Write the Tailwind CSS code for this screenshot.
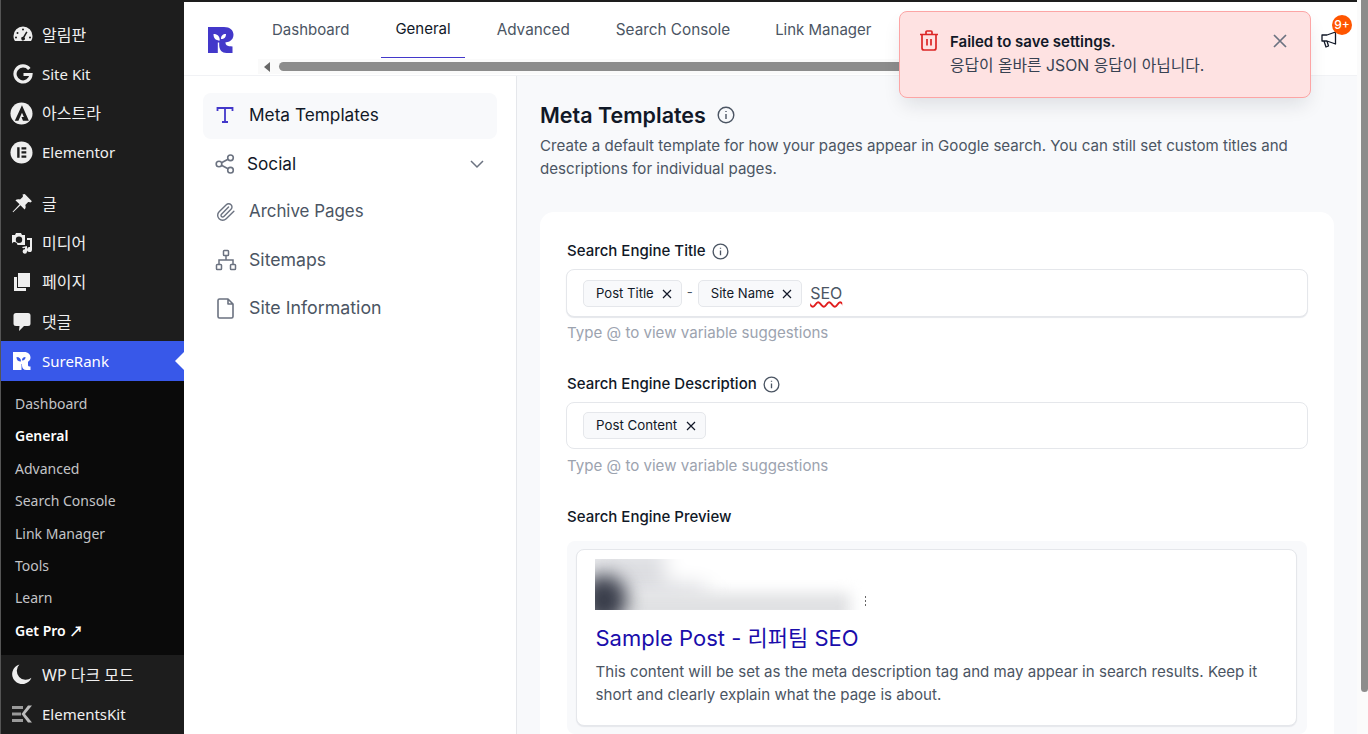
<!DOCTYPE html>
<html lang="ko">
<head>
<meta charset="utf-8">
<title>SureRank</title>
<script src="https://cdn.jsdelivr.net/npm/@tailwindcss/browser@4"></script>
</head>
<body class="h-[734px] w-[1368px] overflow-hidden bg-white font-['Inter','Noto_Sans_CJK_KR',sans-serif]">
<div class="relative flex h-[734px] w-[1368px] overflow-hidden">
  <!-- WP sidebar -->
  <aside class="flex h-full w-[184px] shrink-0 flex-col border-l border-[#555] bg-[#1d1d1d] pt-[15px] font-['Noto_Sans','Noto_Sans_CJK_KR',sans-serif] text-[15px] text-[#f0f0f0]">
    <a class="flex h-[39.3px] items-center"><span class="flex w-[41px] justify-center pl-[2px]"><svg class="h-[20px] w-[20px]" viewBox="0 0 20 20" fill="#eee"><path d="M10 1.5A9.5 9.5 0 0 0 .5 11c0 1.9.5 3.6 1.5 5h16c1-1.4 1.5-3.1 1.5-5A9.5 9.5 0 0 0 10 1.5zM10 3.5a1 1 0 1 1 0 2 1 1 0 0 1 0-2zM4.500 7a1 1 0 1 1 0 2 1 1 0 0 1 0-2zM3 11.500a1 1 0 1 1 0 2 1 1 0 0 1 0-2zM17 11.500a1 1 0 1 1 0 2 1 1 0 0 1 0-2zM13.200 6.500l1.300.7-3 5.300a1.800 1.800 0 1 1-1.400-.7z" fill-rule="evenodd"/></svg></span><span class="text-[16px]">알림판</span></a>
    <a class="flex h-[39.3px] items-center"><span class="flex w-[41px] justify-center pl-[2px]"><svg class="h-[20px] w-[20px]" viewBox="0 0 20 20" fill="none" stroke="#eee" stroke-width="3.200"><path d="M16.300 5A8 8 0 1 0 18 10.500H10.500"/></svg></span><span>Site Kit</span></a>
    <a class="flex h-[39.3px] items-center"><span class="flex w-[41px] justify-center"><svg class="h-[23px] w-[23px]" viewBox="0 0 24 24"><circle cx="12" cy="12" r="11.500" fill="#eee"/><path d="M12.500 3.500 5 19.500h3.800l3.700-8.300 2 4.500h-2.500l1.500 3.800h6.200z" fill="#1d1d1d"/></svg></span><span class="text-[16px]">아스트라</span></a>
    <a class="flex h-[39.3px] items-center"><span class="flex w-[41px] justify-center"><svg class="h-[23px] w-[23px]" viewBox="0 0 24 24"><circle cx="12" cy="12" r="11.500" fill="#eee"/><path d="M7.500 6.500h2.500v11H7.500zM12 6.500h5v2.300h-5zM12 10.800h5v2.300h-5zM12 15.200h5v2.300h-5z" fill="#1d1d1d"/></svg></span><span>Elementor</span></a>
    <div class="h-[12px]"></div>
    <a class="flex h-[39.3px] items-center"><span class="flex w-[41px] justify-center"><svg class="h-[22px] w-[22px]" viewBox="0 0 20 20" fill="#eee"><path d="M12.500 1 19 7.500l-1.300 1.100c-.8-.5-1.600-.6-2.300-.2L13 10.800c.6 1.500.4 3-.6 4.200L8.600 11.200 2 17.500l-.6-.5 6.400-6.700L4 6.600c1.200-1 2.800-1.200 4.200-.6l2.400-2.400c.4-.7.300-1.500-.2-2.300z"/></svg></span><span class="text-[16px]">글</span></a>
    <a class="flex h-[39.3px] items-center"><span class="flex w-[41px] justify-center"><svg class="h-[22px] w-[22px]" viewBox="0 0 22 22" fill="#eee"><path d="M1 3h3l1-2h5l1 2h3v10h-7.500A3 3 0 0 0 1 11.500zM8 4.500a3.200 3.200 0 1 0 0 6.400 3.200 3.200 0 0 0 0-6.400zM21 6v11.500a2.500 2.500 0 1 1-2-2.400V8h-3V6zM11 15l5-1v5.500a2.200 2.200 0 1 1-2-2.200v-1.500l-2 .5z"/></svg></span><span class="text-[16px]">미디어</span></a>
    <a class="flex h-[39.3px] items-center"><span class="flex w-[41px] justify-center"><svg class="h-[20px] w-[20px]" viewBox="0 0 20 20" fill="#eee"><path d="M6 1h12v14H6zM2 5h3v11h9v3H2z"/></svg></span><span class="text-[16px]">페이지</span></a>
    <a class="flex h-[39.3px] items-center"><span class="flex w-[41px] justify-center"><svg class="h-[20px] w-[20px]" viewBox="0 0 20 20" fill="#eee"><path d="M4 1h12a2.500 2.500 0 0 1 2.500 2.500v8A2.500 2.500 0 0 1 16 14h-4l-5 5 .5-5H4a2.500 2.500 0 0 1-2.500-2.500v-8A2.500 2.500 0 0 1 4 1z"/></svg></span><span class="text-[16px]">댓글</span></a>
    <a class="relative flex h-[40px] items-center bg-[#3858e9] text-white"><span class="flex w-[41px] justify-center"><svg class="h-[20px] w-[20px]" viewBox="0 0 20 20" fill="#fff"><path fill-rule="evenodd" d="M1 1h11c4.500 0 6.500 2.500 6.500 5.500 0 2-1 3.500-2.500 4.300V14c0 1 .7 1.600 2.500 1.600V19h-4c-3 0-4.500-1.800-4.500-4.500V13H9.500v6H1zM4.500 6c0 3 1.500 4.500 4.500 4.500 0-3-1.500-4.500-4.500-4.500zm9 0c-2.500 0-3.500 1.500-3.500 3.500 2.500 0 3.500-1.500 3.500-3.500z"/></svg></span><span>SureRank</span><span class="absolute right-0 top-[11px] h-0 w-0 border-y-[9px] border-r-[9px] border-y-transparent border-r-white"></span></a>
    <div class="flex h-[274px] flex-col bg-[#0a0a0a] pt-[6px] text-[14px] text-[#c3c4c7]">
      <a class="flex h-[32.4px] items-center pl-[14px]">Dashboard</a>
      <a class="flex h-[32.4px] items-center pl-[14px] font-semibold text-white">General</a>
      <a class="flex h-[32.4px] items-center pl-[14px]">Advanced</a>
      <a class="flex h-[32.4px] items-center pl-[14px]">Search Console</a>
      <a class="flex h-[32.4px] items-center pl-[14px]">Link Manager</a>
      <a class="flex h-[32.4px] items-center pl-[14px]">Tools</a>
      <a class="flex h-[32.4px] items-center pl-[14px]">Learn</a>
      <a class="flex h-[32.4px] items-center pl-[14px] font-semibold text-white">Get Pro ↗</a>
    </div>
    <a class="flex h-[39px] items-center"><span class="flex w-[41px] justify-center"><svg class="h-[21px] w-[21px]" viewBox="0 0 20 20" fill="#eee"><path d="M8 .5A9.500 9.500 0 1 0 19.500 13 8.500 8.500 0 0 1 8 .5z"/></svg></span><span class="text-[16px]">WP 다크 모드</span></a>
    <a class="flex h-[39px] items-center"><span class="flex w-[41px] justify-center"><svg class="h-[22px] w-[22px]" viewBox="0 0 22 22" fill="#9a9a9a"><path d="M1 3h11v3H1zM1 9.500h9v3H1zM1 16h11v3H1z"/><path d="M21 2.500 14 11l7 8.500h-4L10.500 11 17 2.500z" fill="#bbb"/></svg></span><span>ElementsKit</span></a>
  </aside>

  <!-- Main -->
  <div class="flex h-full w-[1173px] shrink-0 flex-col">
    <div class="h-[2px] shrink-0 bg-[#1d1d1d]"></div>
    <header class="flex h-[74px] shrink-0 items-start border-b border-[#f1f2f5] bg-white">
      <div class="pl-[24px] pt-[25px]"><svg class="h-[26px] w-[26px]" viewBox="0 0 26 26" fill="#4338ca"><path fill-rule="evenodd" d="M0 0h16c6 0 9.500 3.200 9.500 7.800 0 3-1.500 5.300-3.700 6.400-1.500.8-3.300 1-4.300 1 0 3 1.500 4 7 4.200V26h-6c-4.500 0-7.300-3-7.300-8v-2.500H9.800V26H0zM5.500 7c0 4.500 2.300 6.500 6.300 6.500 0-4-2-6.500-6.300-6.500zm12.500 0c-3.500 0-5 2-5 5 3.500 0 5-2 5-5z"/></svg></div>
      <div class="ml-[24px] w-[1040px] shrink-0">
        <nav class="flex h-[56px] gap-[18px] text-[15px] text-[#4b5563]">
          <a class="flex h-[56px] items-center px-[14px]">Dashboard</a>
          <a class="flex h-[56px] items-center border-b border-[#4338ca] px-[14px] text-[#111827]">General</a>
          <a class="flex h-[56px] items-center px-[14px] text-[15.3px]">Advanced</a>
          <a class="flex h-[56px] items-center px-[14px] text-[15.3px]">Search Console</a>
          <a class="-ml-[1px] flex h-[56px] items-center px-[14px]">Link Manager</a>
        </nav>
        <div class="mt-[1px] flex h-[15px] w-[700px] items-center bg-[#fafafa] pl-[6px]">
          <span class="h-0 w-0 border-y-[5px] border-r-[6px] border-y-transparent border-r-[#666]"></span>
          <span class="ml-[9px] h-[9px] w-[660px] rounded-l-[5px] bg-[#8c8c8c]"></span>
        </div>
      </div>
    </header>
    <div class="flex min-h-0 flex-1">
      <!-- Sub nav -->
      <nav class="flex h-full w-[333px] shrink-0 flex-col border-r border-[#e5e7eb] bg-white px-[19px] pt-[17px] text-[#4b5563]">
        <a class="flex h-[46px] items-center rounded-lg bg-[#f8f9fb] pb-[2px] pl-[13px] text-[17.25px] text-[#111827]"><svg class="h-[18px] w-[18px] shrink-0" viewBox="0 0 18 18" fill="none" stroke="#4338ca" stroke-width="1.800"><path d="M1.500 5V2h15v3M9 2v14M6 16h6"/></svg><span class="ml-[15px]">Meta Templates</span></a>
        <a class="mt-[1px] flex h-[48px] items-center pl-[12px] pr-[13px] text-[17.2px] text-[#111827]"><svg class="h-[20px] w-[20px] shrink-0" viewBox="0 0 20 20" fill="none" stroke="#6b7280" stroke-width="1.600"><circle cx="15.500" cy="3.800" r="2.800"/><circle cx="15.500" cy="16.200" r="2.800"/><circle cx="4" cy="10" r="2.800"/><path d="m6.500 8.700 6.500-3.500M6.500 11.300l6.500 3.500"/></svg><span class="ml-[12px] flex-1">Social</span><svg class="h-[14px] w-[14px]" viewBox="0 0 14 14" fill="none" stroke="#6b7280" stroke-width="1.500"><path d="m1 4 6 6 6-6"/></svg></a>
        <a class="flex h-[48px] items-center pl-[13px] text-[16.9px]"><svg class="h-[20px] w-[20px] shrink-0" viewBox="0 0 24 24" fill="none" stroke="#6b7280" stroke-width="1.700" stroke-linecap="round" stroke-linejoin="round"><path d="m21.440 11.050-9.190 9.190a6 6 0 0 1-8.490-8.490l8.570-8.570A4 4 0 1 1 18 8.840l-8.590 8.570a2 2 0 0 1-2.830-2.830l8.490-8.480"/></svg><span class="ml-[13px]">Archive Pages</span></a>
        <a class="flex h-[48px] items-center pl-[12px] text-[17.7px]"><svg class="h-[22px] w-[22px] shrink-0" viewBox="0 0 22 22" fill="none" stroke="#6b7280" stroke-width="1.500"><rect x="8.500" y="1.500" width="5" height="5" rx=".8"/><rect x="1.500" y="15.500" width="5" height="5" rx=".8"/><rect x="15.500" y="15.500" width="5" height="5" rx=".8"/><path d="M11 6.500V11M4 15.500V11h14v4.500"/></svg><span class="ml-[12px]">Sitemaps</span></a>
        <a class="flex h-[48px] items-center pl-[13px] text-[17.8px]"><svg class="h-[21px] w-[20px] shrink-0" viewBox="0 0 20 21" fill="none" stroke="#6b7280" stroke-width="1.600" stroke-linejoin="round"><path d="M3.500 1h8.500l5 5v12.500a1.500 1.500 0 0 1-1.500 1.500h-12A1.500 1.500 0 0 1 2 18.500v-16A1.500 1.500 0 0 1 3.500 1zM12 1v5h5"/></svg><span class="ml-[13px]">Site Information</span></a>
      </nav>
      <!-- Content -->
      <main class="min-w-0 flex-1 overflow-hidden bg-[#f8f9fb] pl-[23px] pr-[23px] pt-[23px]">
        <div class="flex h-[32px] items-center gap-[11px]">
          <h1 class="text-[21.5px] font-semibold text-[#111827]">Meta Templates</h1>
          <svg class="h-[18px] w-[18px]" viewBox="0 0 18 18" fill="none" stroke="#4b5563" stroke-width="1.400"><circle cx="9" cy="9" r="7.800"/><path d="M9 8v5M9 5v1"/></svg>
        </div>
        <p class="mt-[3px] w-[794px] text-[15.1px] leading-[23px] text-[#4b5563]">Create a default template for how your pages appear in Google search. You can still set custom titles and descriptions for individual pages.</p>
        <section class="mt-[32px] w-[794px] rounded-t-[14px] bg-white px-[26px] pt-[27px] pb-[40px]">
          <div class="flex h-[24px] items-center gap-[6px] pl-[1px] text-[15px] font-medium text-[#111827]">Search Engine Title <svg class="h-[17px] w-[17px]" viewBox="0 0 18 18" fill="none" stroke="#4b5563" stroke-width="1.400"><circle cx="9" cy="9" r="7.800"/><path d="M9 8v5M9 5v1"/></svg></div>
          <div class="mt-[6px] flex h-[48px] items-center rounded-lg border border-[#e5e7eb] bg-white pl-[16px] text-[13.1px] text-[#111827] shadow-[0_1px_1px_#e5e7eb]">
            <span class="flex h-[27px] items-center gap-[8px] rounded-[5px] border border-[#e5e7eb] bg-[#f8f9fb] pl-[12px] pr-[9px] pt-[1px]">Post Title <svg class="h-[10px] w-[10px]" viewBox="0 0 10 10" stroke="#111827" stroke-width="1.200"><path d="m1 1 8 8M9 1l-8 8"/></svg></span>
            <span class="mx-[5px] text-[#4b5563]">-</span>
            <span class="flex h-[27px] items-center gap-[8px] rounded-[5px] border border-[#e5e7eb] bg-[#f8f9fb] pl-[12px] pr-[9px] pt-[1px]">Site Name <svg class="h-[10px] w-[10px]" viewBox="0 0 10 10" stroke="#111827" stroke-width="1.200"><path d="m1 1 8 8M9 1l-8 8"/></svg></span>
            <span class="ml-[8px] text-[16px] text-[#4b5563] underline decoration-[#e11d1d] decoration-wavy decoration-[1.5px] underline-offset-[2px]">SEO</span>
          </div>
          <p class="mt-[5px] pl-[1px] text-[15.1px] leading-[22px] text-[#9ca3af]">Type @ to view variable suggestions</p>
          <div class="mt-[28px] flex h-[24px] items-center gap-[6px] pl-[1px] text-[15px] font-medium text-[#111827]">Search Engine Description <svg class="h-[17px] w-[17px]" viewBox="0 0 18 18" fill="none" stroke="#4b5563" stroke-width="1.400"><circle cx="9" cy="9" r="7.800"/><path d="M9 8v5M9 5v1"/></svg></div>
          <div class="mt-[6px] flex h-[47px] items-center rounded-lg border border-[#e5e7eb] bg-white pl-[16px] text-[13.3px] text-[#111827]">
            <span class="flex h-[27px] items-center gap-[9px] rounded-[5px] border border-[#e5e7eb] bg-[#f8f9fb] pl-[12px] pr-[9px]">Post Content <svg class="h-[10px] w-[10px]" viewBox="0 0 10 10" stroke="#111827" stroke-width="1.200"><path d="m1 1 8 8M9 1l-8 8"/></svg></span>
          </div>
          <p class="mt-[6px] pl-[1px] text-[15.1px] leading-[22px] text-[#9ca3af]">Type @ to view variable suggestions</p>
          <div class="mt-[28px] flex h-[24px] items-center pl-[1px] text-[15px] font-medium text-[#111827]">Search Engine Preview</div>
          <div class="mt-[12px] ml-[1px] w-[740px] rounded-lg bg-[#f8f9fb] p-[8px_10px_8px_9px]">
            <div class="h-[177px] w-[721px] rounded-lg border border-[#e5e7eb] bg-white pl-[18.5px] pr-[14px] pt-[9px] shadow-[0_1px_1px_#e5e7eb]">
              <div class="relative -ml-[1px] h-[51px] w-[272px] overflow-hidden bg-white">
                <span class="absolute -left-[10px] -top-[10px] h-[50px] w-[120px] bg-[#dcdde1] blur-[12px]"></span>
                <span class="absolute left-[70px] top-[-20px] h-[44px] w-[220px] bg-white blur-[10px]"></span>
                <span class="absolute left-[30px] top-[34px] h-[30px] w-[225px] bg-[#e0e1e3] blur-[7px]"></span>
                <span class="absolute -left-[14px] top-[16px] h-[50px] w-[46px] rounded-full bg-[#3a3e4b] blur-[9px]"></span>
                <span class="absolute right-[1px] top-[37px] flex flex-col gap-[2px]"><i class="h-[2px] w-[1px] bg-[#666]"></i><i class="h-[2px] w-[1px] bg-[#666]"></i><i class="h-[2px] w-[1px] bg-[#666]"></i></span>
              </div>
              <h2 class="mt-[13px] text-[22px] leading-[30px] text-[#1a0dab]">Sample Post - 리퍼팀 SEO</h2>
              <p class="mt-[7px] text-[15.1px] leading-[23px] text-[#4b5563]">This content will be set as the meta description tag and may appear in search results. Keep it short and clearly explain what the page is about.</p>
            </div>
          </div>
        </section>
      </main>
    </div>
  </div>
  <!-- window scrollbar -->
  <div class="h-full w-[11px] shrink-0 bg-[#fbfbfb] pl-[4px]"><div class="h-[692px] w-[7px] rounded-b-[4px] bg-[#8c8c8c]"></div></div>

  <!-- notification -->
  <div class="absolute left-[1320px] top-[15px] h-[32px] w-[32px]">
    <svg class="absolute left-[1px] top-[16px] h-[17px] w-[16px]" viewBox="0 0 16 17" fill="none" stroke="#111827" stroke-width="1.300" stroke-linejoin="round"><path d="M1 4h5l8.500-3v12L6 10H1zM3 10l2 6 2.500-1-1.500-5"/></svg>
    <span class="absolute left-[12px] top-0 flex h-[20px] w-[20px] items-center justify-center rounded-full bg-[#ff5500] text-[12px] font-medium text-white">9+</span>
  </div>
  <!-- toast -->
  <div class="absolute left-[899px] top-[11px] flex h-[87px] w-[412px] items-start rounded-lg border border-[#fca5a5] bg-[#fee2e2] pl-[19px] pr-[23px] pt-[17px] shadow-[0_10px_20px_-4px_rgba(17,24,39,0.12)]">
    <svg class="mt-[1px] h-[21px] w-[20px] shrink-0" viewBox="0 0 20 21" fill="none" stroke="#dc2626" stroke-width="1.700" stroke-linejoin="round"><path d="M1 4.500h18M7 4.500V2a1 1 0 0 1 1-1h4a1 1 0 0 1 1 1v2.500M3 4.500V18a2 2 0 0 0 2 2h10a2 2 0 0 0 2-2V4.500M8 9v6.500M12 9v6.500"/></svg>
    <div class="ml-[11px] mt-[1px] flex-1 text-[15px] leading-[24px] text-[#111827]">
      <p class="font-semibold">Failed to save settings.</p>
      <p class="text-[15.8px] font-normal text-[#374151]">응답이 올바른 JSON 응답이 아닙니다.</p>
    </div>
    <svg class="mt-[5px] h-[14px] w-[14px] shrink-0" viewBox="0 0 14 14" stroke="#6b7280" stroke-width="1.700"><path d="m1 1 12 12M13 1 1 13"/></svg>
  </div>
</div>
</body>
</html>
